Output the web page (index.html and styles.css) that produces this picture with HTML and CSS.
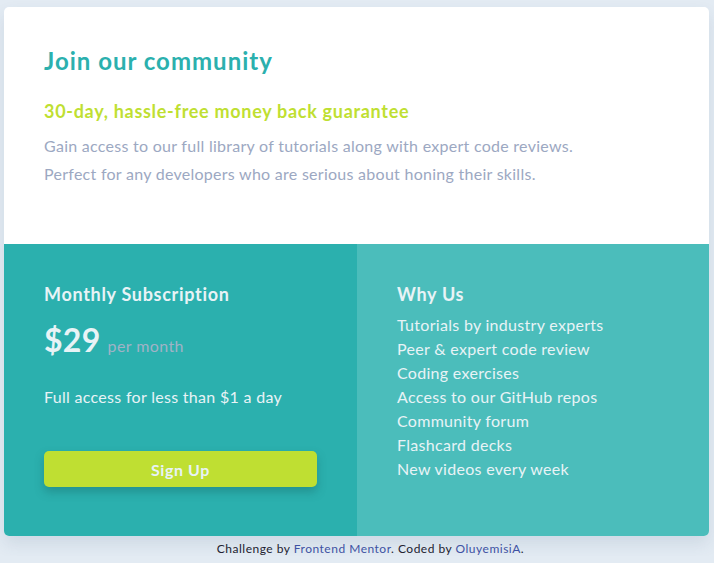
FILE: index.html
```html
<!DOCTYPE html>
<html lang="en">
<head>
<meta charset="utf-8">
<title>Single price grid</title>
<link rel="stylesheet" href="styles.css">
</head>
<body>
<main class="card">
  <section class="top">
    <h1 class="title">Join our community</h1>
    <h2 class="subtitle">30-day, hassle-free money back guarantee</h2>
    <p class="desc">Gain access to our full library of tutorials along with expert code reviews.<br>Perfect for any developers who are serious about honing their skills.</p>
  </section>
  <div class="bottom">
    <section class="sub">
      <h3 class="heading">Monthly Subscription</h3>
      <p class="price"><span class="amount">$29</span> <span class="per">per month</span></p>
      <p class="full">Full access for less than $1 a day</p>
      <button class="btn">Sign Up</button>
    </section>
    <section class="why">
      <h3 class="heading">Why Us</h3>
      <ul class="list">
        <li>Tutorials by industry experts</li>
        <li>Peer &amp; expert code review</li>
        <li>Coding exercises</li>
        <li>Access to our GitHub repos</li>
        <li>Community forum</li>
        <li>Flashcard decks</li>
        <li>New videos every week</li>
      </ul>
    </section>
  </div>
</main>
<footer class="attribution">Challenge by <a href="#">Frontend Mentor</a>. Coded by <a href="#">OluyemisiA</a>.</footer>
</body>
</html>
```
FILE: styles.css
```css
* { box-sizing: border-box; }
html, body { margin: 0; padding: 0; }
body {
  background: #e3ebf3;
  font-family: "Lato", "Noto Sans", sans-serif;
  font-size: 16px;
  padding: 7px 5px 0 4px;
}
.card {
  background: #fff;
  border-radius: 5px;
  overflow: hidden;
  box-shadow: 0 8px 16px rgba(60, 90, 120, 0.12);
}
.top {
  height: 237px;
  padding: 40px 40px 0;
}
.title {
  margin: 0;
  font-size: 24px;
  line-height: 28px;
  font-weight: 700;
  color: #2bb0ae;
  letter-spacing: 1px;
}
.subtitle {
  margin: 24px 0 0;
  font-size: 18px;
  line-height: 24px;
  font-weight: 700;
  color: #bfdf32;
  letter-spacing: 0.7px;
}
.desc {
  margin: 9px 0 0;
  font-size: 16px;
  line-height: 28px;
  color: #9ca8c2;
  letter-spacing: 0.27px;
}
.bottom {
  display: grid;
  grid-template-columns: 353px 1fr;
  height: 292px;
}
.sub {
  background: #2bb0ae;
  padding: 38px 40px 0;
  color: #e8f3f6;
}
.why {
  background: #4bbdbb;
  padding: 38px 40px 0;
  color: #e8f3f6;
}
.heading {
  margin: 0;
  font-size: 18px;
  line-height: 24px;
  font-weight: 700;
  letter-spacing: 0.7px;
}
.price {
  margin: 14px 0 0;
  display: flex;
  align-items: baseline;
  gap: 7px;
  line-height: 40px;
}
.amount {
  font-size: 32px;
  font-weight: 700;
  letter-spacing: 0.3px;
}
.per {
  font-size: 16px;
  color: #a0b3c6;
  letter-spacing: 0.4px;
}
.full {
  margin: 19px 0 0;
  line-height: 24px;
  letter-spacing: 0.3px;
}
.btn {
  display: block;
  margin-top: 42px;
  width: 273px;
  height: 36px;
  border: none;
  border-radius: 5px;
  background: #bfdf32;
  color: #e8f3f6;
  font-family: inherit;
  font-size: 16px;
  font-weight: 700;
  letter-spacing: 0.6px;
  box-shadow: 0 5px 10px rgba(20, 90, 90, 0.35);
}
.list {
  list-style: none;
  margin: 7px 0 0;
  padding: 0;
  line-height: 24px;
  letter-spacing: 0.3px;
}
.attribution {
  text-align: center;
  font-size: 12px;
  line-height: 14px;
  color: #222230;
  letter-spacing: 0.5px;
  padding: 6px 0 0 28px;
}
.attribution a {
  color: #3e52a3;
  text-decoration: none;
}
```
